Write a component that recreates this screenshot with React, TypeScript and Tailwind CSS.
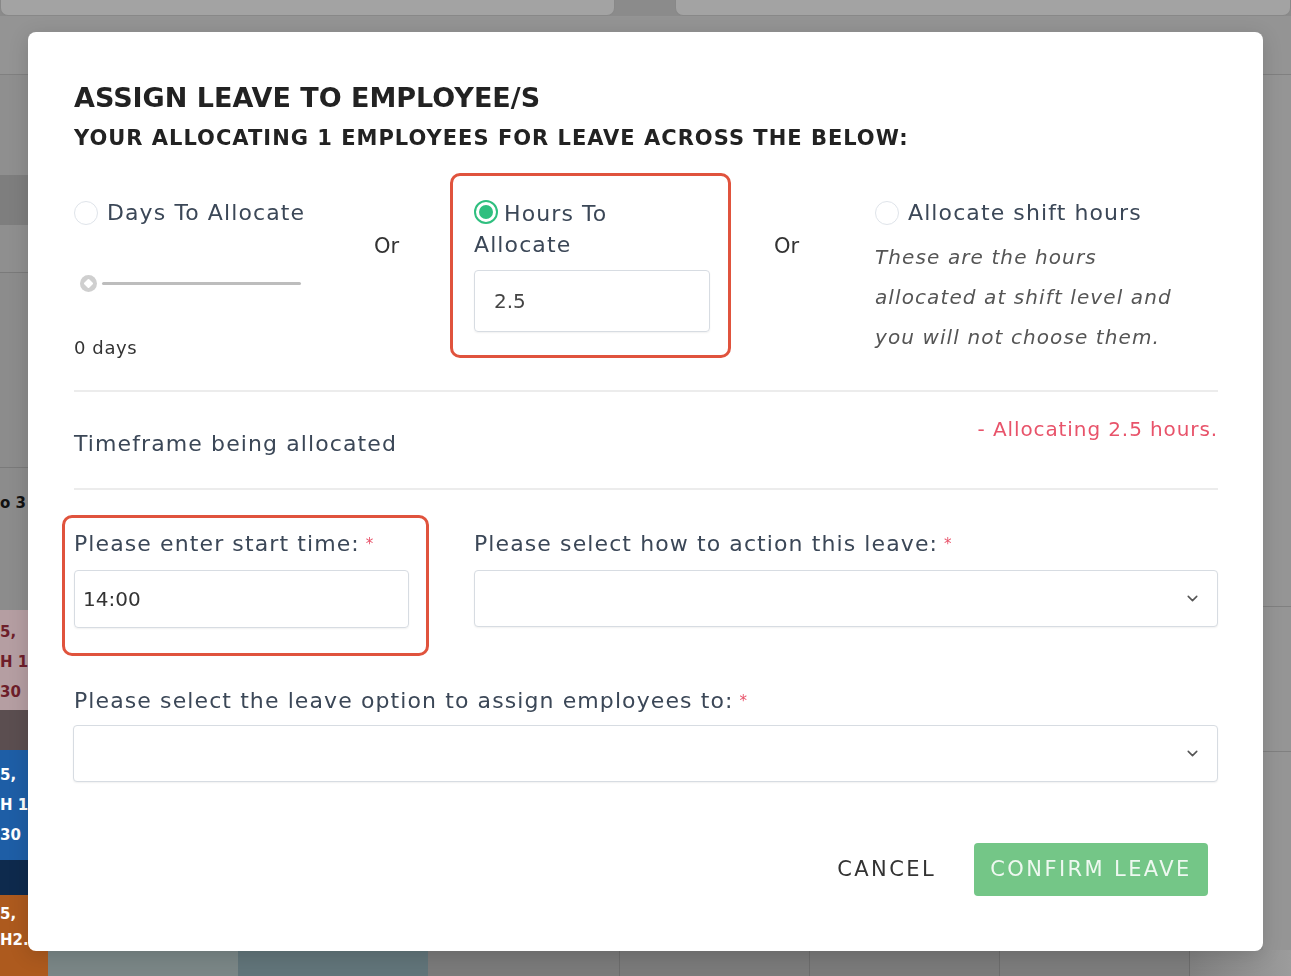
import React from 'react';
import { ChevronDown } from 'lucide-react';

const font = "font-['DejaVu_Sans',sans-serif]";
const label = 'text-[22px] leading-[28px] tracking-[1.1px] text-[#3b4757]';

const Radio: React.FC<{ checked?: boolean }> = ({ checked }) =>
  checked ? (
    <span className="flex h-[24px] w-[24px] shrink-0 items-center justify-center rounded-full border-[2px] border-[#2fbf7f] bg-white">
      <span className="h-[14px] w-[14px] rounded-full bg-[#2fbf7f]" />
    </span>
  ) : (
    <span className="h-[24px] w-[24px] shrink-0 rounded-full border border-[#dfe4ea] bg-white" />
  );

const Required = () => <span className="ml-[6px] text-[15px] align-top text-[#e8536a]">*</span>;

const SelectBox: React.FC = () => (
  <div className="flex h-[57px] w-full items-center justify-end rounded-[4px] border border-[#d7dce2] bg-white pr-[16px] shadow-[0_1px_2px_rgba(0,0,0,0.06)]">
    <ChevronDown size={17} strokeWidth={2.2} className="text-[#555]" />
  </div>
);

// the dimmed page that sits behind the dialog
const Backdrop: React.FC = () => (
  <div className="grid h-[976px] w-full grid-rows-[16px_59px_875px_26px] overflow-hidden bg-[#8d8d8d]">
    <div className="flex bg-[#8b8b8b]">
      <div className="w-[615px] rounded-b-[8px] border border-t-0 border-[#888] bg-[#a3a3a3]" />
      <div className="w-[60px]" />
      <div className="flex-1 rounded-b-[8px] border border-t-0 border-[#888] bg-[#a3a3a3]" />
    </div>
    <div className="border-b border-[#808080] bg-[#949494]" />
    <div className="flex">
      <div className="flex w-[48px] flex-col overflow-hidden font-bold">
        <div className="h-[100px] bg-[#8f8f8f]" />
        <div className="h-[50px] bg-[#7e7e7e]" />
        <div className="h-[48px] border-b border-[#7a7a7a] bg-[#8f8f8f]" />
        <div className="h-[195px] border-b border-[#7a7a7a] bg-[#8c8c8c]" />
        <div className="h-[142px] bg-[#8c8c8c] pt-[25px] text-[15px] leading-[20px] text-[#111]">o 3</div>
        <div className="h-[100px] bg-[#b59ea2] pt-[7px] text-[15px] leading-[30px] text-[#6e1e2a]">
          <div>5,</div>
          <div>H 1.</div>
          <div>30</div>
        </div>
        <div className="h-[40px] bg-[#5b4e50]" />
        <div className="h-[110px] bg-[#1e5ea6] pt-[10px] text-[15px] leading-[30px] text-white">
          <div>5,</div>
          <div>H 1.</div>
          <div>30</div>
        </div>
        <div className="h-[35px] bg-[#0e2a4d]" />
        <div className="h-[55px] bg-[#ad5a1e] pt-[6px] text-[15px] leading-[26px] text-white">
          <div>5,</div>
          <div>H2..</div>
        </div>
      </div>
      <div className="flex flex-1">
        <div className="flex-1" />
        <div className="flex w-[28px] flex-col bg-[#959595]">
          <div className="h-[532px] border-b border-[#808080]" />
          <div className="h-[145px] border-b border-[#808080]" />
        </div>
      </div>
    </div>
    <div className="flex">
      <div className="w-[48px] bg-[#ad5a1e]" />
      <div className="w-[190px] bg-[#7a8686]" />
      <div className="w-[190px] bg-[#617479]" />
      <div className="w-[192px] border-r border-[#6c6c6c] bg-[#7a7a7a]" />
      <div className="w-[190px] border-r border-[#6c6c6c] bg-[#7a7a7a]" />
      <div className="w-[190px] border-r border-[#6c6c6c] bg-[#7a7a7a]" />
      <div className="w-[190px] border-r border-[#6c6c6c] bg-[#7c7c7c]" />
      <div className="flex-1 bg-gradient-to-r from-[#808080] to-[#9c9c9c]" />
    </div>
  </div>
);

export default function App() {
  return (
    <div className={`relative h-[976px] w-full overflow-hidden ${font}`}>
      <Backdrop />

      {/* dialog */}
      <div className="fixed inset-0 flex items-start pl-[28px] pt-[32px]">
        <div className="w-[1235px] rounded-[8px] bg-white pb-[55px] pl-[46px] pr-[45px] pt-[50px] shadow-[0_4px_20px_rgba(0,0,0,0.15)]">
          <h2 className="text-[27px] font-bold leading-[32px] text-[#222]">ASSIGN LEAVE TO EMPLOYEE/S</h2>
          <p className="mt-[11px] text-[21px] font-bold leading-[26px] tracking-[1px] text-[#222]">
            YOUR ALLOCATING 1 EMPLOYEES FOR LEAVE ACROSS THE BELOW:
          </p>

          {/* allocation options */}
          <div className="mt-[22px] flex items-start">
            <div className="w-[300px] pt-[25px]">
              <label className={`flex items-center gap-[9px] ${label} leading-[30px]`}>
                <Radio />
                Days To Allocate
              </label>
              <div className="ml-[6px] mt-[47px] flex items-center">
                <span className="flex h-[17px] w-[17px] items-center justify-center rounded-full bg-[#cfcfcf]">
                  <span className="h-[7px] w-[7px] rotate-45 rounded-[1px] bg-white" />
                </span>
                <span className="ml-[5px] h-[3px] w-[199px] rounded-full bg-[#bdbdbd]" />
              </div>
              <div className="mt-[44px] text-[18px] leading-[24px] tracking-[0.6px] text-[#333]">0 days</div>
            </div>

            <div className="w-[76px] pt-[58px] text-[21px] leading-[30px] text-[#333]">Or</div>

            <div className="w-[281px] rounded-[10px] border-[3px] border-[#e0533d] pb-[23px] pl-[21px] pr-[18px] pt-[22px]">
              <div className={`${label} leading-[31px]`}>
                <span className="mr-[6px] inline-block align-[2px]">
                  <Radio checked />
                </span>
                Hours To
                <br />
                Allocate
              </div>
              <div className="mt-[10px] flex h-[62px] items-center rounded-[4px] border border-[#d7dce2] px-[19px] text-[20px] text-[#444] shadow-[0_1px_2px_rgba(0,0,0,0.06)]">
                2.5
              </div>
            </div>

            <div className="w-[144px] pl-[43px] pt-[58px] text-[21px] leading-[30px] text-[#333]">Or</div>

            <div className="flex-1 pt-[25px]">
              <label className={`flex items-center gap-[9px] ${label} leading-[30px]`}>
                <Radio />
                Allocate shift hours
              </label>
              <p className="mt-[9px] text-[20px] italic leading-[40px] tracking-[1.1px] text-[#555]">
                These are the hours
                <br />
                allocated at shift level and
                <br />
                you will not choose them.
              </p>
            </div>
          </div>

          {/* timeframe */}
          <div className="mt-[30px] flex h-[100px] items-start justify-between border-y-2 border-[#ececec]">
            <div className={`mt-[38px] ${label}`}>Timeframe being allocated</div>
            <div className="mt-[25px] text-[20px] leading-[24px] tracking-[0.9px] text-[#e8536a]">
              - Allocating 2.5 hours.
            </div>
          </div>

          {/* start time + action */}
          <div className="mt-[25px] flex items-start">
            <div className="-ml-[12px] w-[367px] rounded-[10px] border-[3px] border-[#e0533d] pb-[25px] pl-[9px] pr-[17px] pt-[12px]">
              <div className={label}>
                Please enter start time:
                <Required />
              </div>
              <div className="mt-[12px] flex h-[58px] items-center rounded-[4px] border border-[#d7dce2] px-[8px] text-[20px] text-[#333] shadow-[0_1px_2px_rgba(0,0,0,0.06)]">
                14:00
              </div>
            </div>
            <div className="ml-[45px] flex-1 pt-[15px]">
              <div className={label}>
                Please select how to action this leave:
                <Required />
              </div>
              <div className="mt-[12px]">
                <SelectBox />
              </div>
            </div>
          </div>

          {/* leave option */}
          <div className="mt-[31px]">
            <div className={label}>
              Please select the leave option to assign employees to:
              <Required />
            </div>
            <div className="-ml-[1px] mt-[10px]">
              <SelectBox />
            </div>
          </div>

          {/* actions */}
          <div className="mt-[61px] flex items-center justify-end gap-[38px] pr-[10px]">
            <button className="text-[21px] tracking-[2.4px] text-[#333]">CANCEL</button>
            <button className="h-[53px] w-[234px] rounded-[4px] bg-[#74c687] text-[21px] tracking-[2.4px] text-[#eef8f0]">
              CONFIRM LEAVE
            </button>
          </div>
        </div>
      </div>
    </div>
  );
}
